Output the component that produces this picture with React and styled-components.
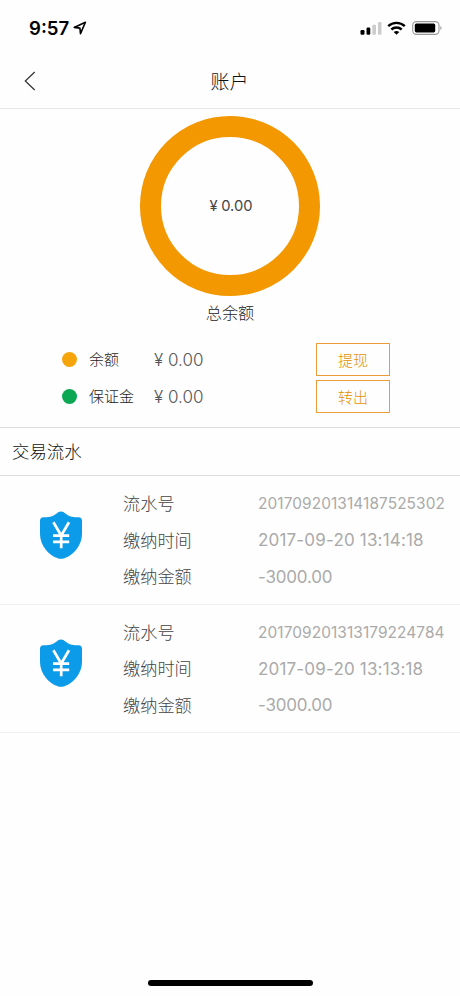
import styled, { createGlobalStyle } from "styled-components";

const GlobalStyle = createGlobalStyle`
  * {
    box-sizing: border-box;
  }
  body {
    margin: 0;
    background-color: #fefefe;
    font-family: Inter, "Noto Sans CJK SC", sans-serif;
    color: #444;
  }
`;

const Screen = styled.main`
  display: flex;
  flex-direction: column;
  width: 460px;
  height: 996px;
  overflow: hidden;
  white-space: nowrap;
`;

const StatusBar = styled.div`
  display: flex;
  align-items: center;
  height: 56px;
  padding: 0 17px 0 29px;
  color: #000;
`;

const Clock = styled.span`
  width: 44px;
  font-size: 18.6px;
  font-weight: 600;
  line-height: 20px;
  letter-spacing: 0;
`;

const StatusIcons = styled.div`
  display: flex;
  align-items: center;
  margin-left: auto;
`;

const WifiSlot = styled.span`
  display: flex;
  margin: 0 6px 0 5px;
`;

const NavBar = styled.header`
  display: grid;
  grid-template-columns: 60px 1fr 60px;
  align-items: center;
  height: 53px;
  border-bottom: 1px solid #e6e6e6;
  > svg {
    margin: -2px 0 0 24px;
  }
  > h1 {
    margin: 0;
    padding: 2px 1px 0 0;
    font-size: 19px;
    font-weight: 300;
    line-height: 28px;
    text-align: center;
    color: #111;
  }
`;

const Summary = styled.section`
  display: flex;
  flex-direction: column;
  align-items: center;
  height: 319px;
  padding-top: 7px;
  border-bottom: 1px solid #dedede;
`;

const Ring = styled.div`
  display: flex;
  align-items: center;
  justify-content: center;
  width: 180px;
  height: 180px;
  padding-left: 2px;
  border: 21px solid #f39800;
  border-radius: 50%;
  font-size: 14.7px;
  word-spacing: -0.5px;
  color: #444;
`;

const RingLabel = styled.p`
  margin: 5px 0 16px;
  font-size: 16.2px;
  font-weight: 300;
  line-height: 24px;
  color: #222;
`;

const BalanceRow = styled.div`
  display: grid;
  grid-template-columns: 27px 65px 162px 74px;
  align-items: center;
  width: 100%;
  height: 37px;
  padding-left: 62px;
`;

const Dot = styled.span`
  width: 15px;
  height: 15px;
  border-radius: 50%;
  background-color: ${({ $color }) => $color};
`;

const BalanceName = styled.span`
  margin-top: -2px;
  font-size: 15px;
  font-weight: 300;
  color: #222;
`;

const BalanceAmount = styled.span`
  font-size: 17px;
  font-weight: 300;
  color: #555;
`;

const OutlineButton = styled.button`
  height: 33px;
  padding: 0 0 1px;
  border: 1px solid #eb9c38;
  background: none;
  font: inherit;
  font-size: 15px;
  font-weight: 300;
  color: #e39200;
`;

const SectionTitle = styled.h2`
  display: flex;
  align-items: center;
  height: 48px;
  margin: 0;
  padding: 0 0 2px 12px;
  border-bottom: 1px solid #dedede;
  font-size: 17.4px;
  font-weight: 300;
  color: #111;
`;

const Record = styled.article`
  display: grid;
  grid-template-columns: 123px 1fr;
  height: 128.7px;
  padding-top: 9px;
  border-bottom: 1px solid #f0f0f0;
  > svg {
    margin: 25.5px 0 0 40px;
  }
`;

const Fields = styled.dl`
  display: grid;
  grid-template-columns: 135px 1fr;
  grid-auto-rows: 36.7px;
  align-items: center;
  align-content: start;
  margin: 0;
`;

const FieldName = styled.dt`
  margin-top: -2px;
  font-size: 17.2px;
  font-weight: 300;
  color: #444;
`;

const FieldValue = styled.dd`
  margin: 0;
  font-size: ${({ $size }) => $size || "17px"};
  letter-spacing: ${({ $spacing }) => $spacing || "0"};
  color: #aaa;
`;

const HomeIndicator = styled.div`
  width: 165px;
  height: 6px;
  margin: auto auto 10px 148px;
  border-radius: 3px;
  background-color: #000;
`;

const LocationIcon = () => (
  <svg width="14" height="14" viewBox="0 0 14 14" fill="none">
    <path
      d="M1.2 6.4 12.4 1.3 7.5 12.6 6.9 7.1Z"
      stroke="#000"
      strokeWidth="1.6"
      strokeLinejoin="round"
    />
  </svg>
);

const SignalIcon = () => (
  <svg width="22" height="14" viewBox="0 0 22 14">
    <rect x="0.5" y="9" width="4" height="4.7" rx="1.2" />
    <rect x="6.5" y="6.5" width="3.8" height="7.2" rx="1.2" />
    <rect x="12.3" y="3.8" width="3.7" height="9.9" rx="1.2" fill="#ccc" />
    <rect x="18" y="1" width="3.5" height="12.7" rx="1.2" fill="#ccc" />
  </svg>
);

const WifiIcon = () => (
  <svg
    width="19"
    height="14"
    viewBox="0 0 19 14"
    fill="none"
    stroke="#000"
    strokeWidth="2.4"
  >
    <path d="M1.2 5.2a12 12 0 0 1 16.6 0" />
    <path d="M4.3 8.5a7.6 7.6 0 0 1 10.4 0" />
    <path d="M9.5 13.7 6.7 10.9q2.8-2 5.6 0Z" fill="#000" stroke="none" />
  </svg>
);

const BatteryIcon = () => (
  <svg width="31" height="14" viewBox="0 0 31 14">
    <rect
      x="0.7"
      y="0.6"
      width="26.3"
      height="12.8"
      rx="3.6"
      fill="none"
      stroke="#999"
      strokeWidth="1.1"
    />
    <rect x="2.8" y="2.6" width="20.4" height="8.8" rx="1.6" />
    <path d="M28.5 4.8q2 2.2 0 4.4Z" fill="#888" />
  </svg>
);

const BackIcon = () => (
  <svg width="12" height="20" viewBox="0 0 12 20" fill="none">
    <path d="M10.7 1 1.3 10l9.4 9" stroke="#333" strokeWidth="1.2" />
  </svg>
);

const ShieldIcon = () => (
  <svg width="42" height="48" viewBox="0 0 42 48">
    <path
      d="M18.2 1.3Q21 -.1 23.8 1.3C28 5.3 32.5 6.5 38.5 6.3Q42 6.4 42 10V23C42 34.5 33 44.6 24.2 47.3Q21 48.3 17.8 47.3C9 44.6 0 34.5 0 23V10Q0 6.4 3.5 6.3C9.5 6.5 14 5.3 18.2 1.3Z"
      fill="#0c9be9"
    />
    <path
      d="M13.4 11.3 21.2 24.5 29 11.3M21.2 24V37.2M13 24.7H29.2M13 30.8H29.2"
      fill="none"
      stroke="#fff"
      strokeWidth="2.7"
    />
  </svg>
);

const balances = [
  { name: "余额", color: "#f5a40c", action: "提现" },
  { name: "保证金", color: "#0ba755", action: "转出" },
];

const records = [
  { id: "201709201314187525302", time: "2017-09-20 13:14:18" },
  { id: "201709201313179224784", time: "2017-09-20 13:13:18" },
];

const App = () => {
  return (
    <>
      <GlobalStyle />
      <Screen>
        <StatusBar>
          <Clock>9:57</Clock>
          <LocationIcon />
          <StatusIcons>
            <SignalIcon />
            <WifiSlot>
              <WifiIcon />
            </WifiSlot>
            <BatteryIcon />
          </StatusIcons>
        </StatusBar>
        <NavBar>
          <BackIcon />
          <h1>账户</h1>
        </NavBar>
        <Summary>
          <Ring>¥ 0.00</Ring>
          <RingLabel>总余额</RingLabel>
          {balances.map((item) => (
            <BalanceRow key={item.name}>
              <Dot $color={item.color} />
              <BalanceName>{item.name}</BalanceName>
              <BalanceAmount>¥ 0.00</BalanceAmount>
              <OutlineButton>{item.action}</OutlineButton>
            </BalanceRow>
          ))}
        </Summary>
        <SectionTitle>交易流水</SectionTitle>
        {records.map((record) => (
          <Record key={record.id}>
            <ShieldIcon />
            <Fields>
              <FieldName>流水号</FieldName>
              <FieldValue $size="15.4px" $spacing="0.1px">
                {record.id}
              </FieldValue>
              <FieldName>缴纳时间</FieldName>
              <FieldValue $spacing="0.18px">{record.time}</FieldValue>
              <FieldName>缴纳金额</FieldName>
              <FieldValue $spacing="-0.18px">-3000.00</FieldValue>
            </Fields>
          </Record>
        ))}
        <HomeIndicator />
      </Screen>
    </>
  );
};

export default App;
